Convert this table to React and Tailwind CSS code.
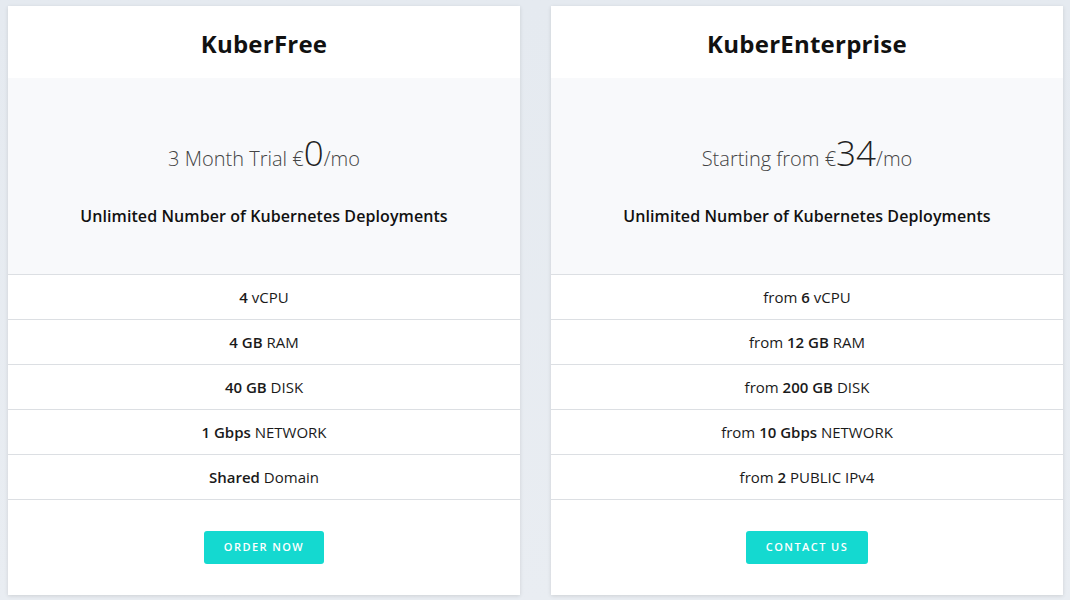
import React from "react";

const font = { fontFamily: '"Open Sans", "Noto Sans", sans-serif' };

function Row({ children }) {
  return (
    <div className="h-[45px] border-b border-[#dcdfe3] flex items-center justify-center text-[15px] text-[#1a1a1a]">
      <span>{children}</span>
    </div>
  );
}

function Card({ title, prefix, price, rows, button }) {
  return (
    <div className="w-[512px] h-[589px] bg-white shadow-[0_1px_4px_rgba(0,0,0,0.12)] flex flex-col">
      <div className="h-[72px] pt-[4px] flex items-center justify-center">
        <h2 className="text-[24px] font-bold text-[#111] tracking-[0.01em]">{title}</h2>
      </div>
      <div className="h-[197px] bg-[#f8f9fb] border-b border-[#dcdfe3] flex flex-col items-center">
        <div className="mt-[49px] h-[40px] flex items-baseline text-[#444] font-light">
          <span className="text-[20px]">{prefix} €</span>
          <span className="text-[35px] text-[#222]">{price}</span>
          <span className="text-[20px]">/mo</span>
        </div>
        <div className="mt-[37px] text-[16px] font-semibold text-[#111] tracking-[0.005em]">
          Unlimited Number of Kubernetes Deployments
        </div>
      </div>
      {rows.map((r, i) => (
        <Row key={i}>{r}</Row>
      ))}
      <div className="flex-1 flex items-start justify-center pt-[31px]">
        <button className="h-[33px] px-[20px] rounded-[3px] bg-[#14d9d0] text-white text-[11px] font-semibold tracking-[0.13em] uppercase">
          {button}
        </button>
      </div>
    </div>
  );
}

export default function App() {
  return (
    <div
      className="w-[1070px] h-[600px] bg-gradient-to-b from-[#e5eaf0] to-[#e9edf2] flex gap-[31px] pl-[8px] pt-[6px]"
      style={font}
    >
      <Card
        title="KuberFree"
        prefix="3 Month Trial"
        price="0"
        button="Order Now"
        rows={[
          <><b className="font-semibold">4</b> vCPU</>,
          <><b className="font-semibold">4 GB</b> RAM</>,
          <><b className="font-semibold">40 GB</b> DISK</>,
          <><b className="font-semibold">1 Gbps</b> NETWORK</>,
          <><b className="font-semibold">Shared</b> Domain</>,
        ]}
      />
      <Card
        title="KuberEnterprise"
        prefix="Starting from"
        price="34"
        button="Contact Us"
        rows={[
          <>from <b className="font-semibold">6</b> vCPU</>,
          <>from <b className="font-semibold">12 GB</b> RAM</>,
          <>from <b className="font-semibold">200 GB</b> DISK</>,
          <>from <b className="font-semibold">10 Gbps</b> NETWORK</>,
          <>from <b className="font-semibold">2</b> PUBLIC IPv4</>,
        ]}
      />
    </div>
  );
}
